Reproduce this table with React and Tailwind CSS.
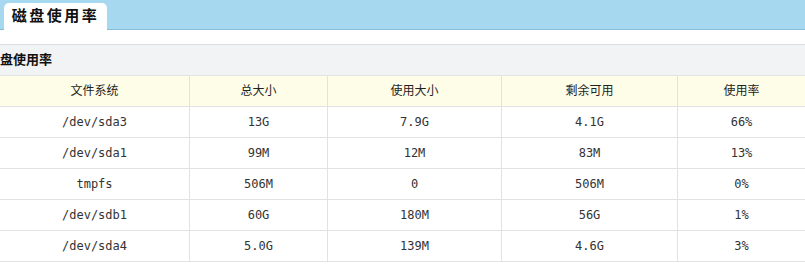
import React from 'react';

const rows = [
  { fs: '/dev/sda3', total: '13G', used: '7.9G', free: '4.1G', pct: '66%' },
  { fs: '/dev/sda1', total: '99M', used: '12M', free: '83M', pct: '13%' },
  { fs: 'tmpfs', total: '506M', used: '0', free: '506M', pct: '0%' },
  { fs: '/dev/sdb1', total: '60G', used: '180M', free: '56G', pct: '1%' },
  { fs: '/dev/sda4', total: '5.0G', used: '139M', free: '4.6G', pct: '3%' },
];

const cols = ['w-[190px]', 'w-[138px]', 'w-[174px]', 'w-[176px]', 'flex-1'];

const DiskUsage = () => {
  const headers = ['文件系统', '总大小', '使用大小', '剩余可用', '使用率'];

  return (
    <div className="w-[805px] h-[266px] bg-white overflow-hidden text-[#222] font-['Liberation_Sans','Noto_Sans_CJK_SC',sans-serif]">
      <div className="h-[30px] bg-[#a6d9ef] border-b border-[#86bcd9] flex items-end pl-[4px]">
        <div className="h-[27px] w-[103px] bg-white rounded-t-[5px] -mb-px flex items-center justify-center text-[15px] font-bold tracking-[2.5px] text-[#111]">
          磁盘使用率
        </div>
      </div>

      <div className="mt-[14px] h-[31px] bg-[#f2f3f5] border-t border-[#dcdde0] flex items-center text-[13px] font-bold text-[#111]">
        <span>盘使用率</span>
      </div>

      <div className="text-[12px]">
        <div className="flex h-[32px] bg-[#fefde8] border-y border-[#e2e2e2]">
          {headers.map((h, i) => (
            <div
              key={h}
              className={`${cols[i]} flex items-center justify-center ${i < 4 ? 'border-r border-[#e2e2e2]' : ''}`}
            >
              {h}
            </div>
          ))}
        </div>

        {rows.map((r) => (
          <div key={r.fs} className="flex h-[31px] border-b border-[#e2e2e2] font-['DejaVu_Sans_Mono',monospace] text-[12px] text-[#333]">
            {[r.fs, r.total, r.used, r.free, r.pct].map((v, i) => (
              <div
                key={i}
                className={`${cols[i]} flex items-center justify-center ${i < 4 ? 'border-r border-[#e2e2e2]' : ''}`}
              >
                {v}
              </div>
            ))}
          </div>
        ))}
      </div>
    </div>
  );
};

export default DiskUsage;
